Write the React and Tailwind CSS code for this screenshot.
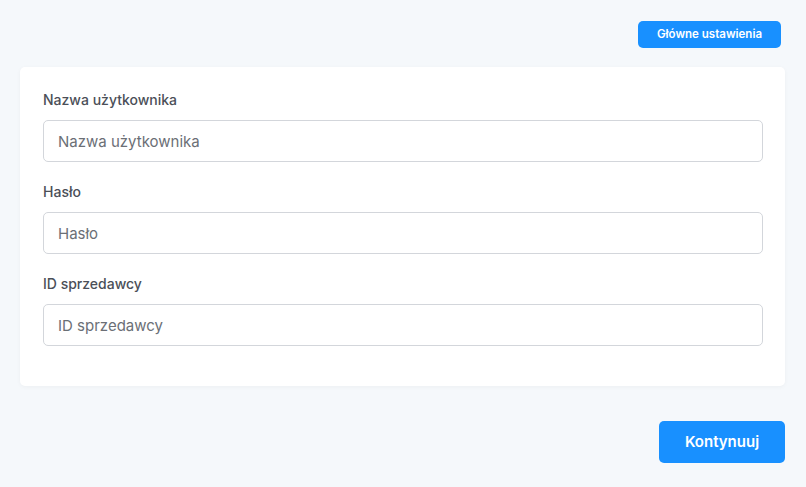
import React from "react";

const fields = ["Nazwa użytkownika", "Hasło", "ID sprzedawcy"];

export default function App() {
  return (
    <div
      className="min-h-[487px] bg-[#f5f8fb] pl-5 pr-[21px] pt-[21px]"
      style={{ fontFamily: "Inter, 'Noto Sans', sans-serif" }}
    >
      <div className="flex justify-end pr-1">
        <button className="h-[27px] w-[143px] rounded-[5px] bg-[#1890ff] text-[11.5px] font-semibold text-white">
          Główne ustawienia
        </button>
      </div>

      {/* Form Card */}
      <div className="mt-[19px] rounded-[5px] bg-white pl-[23px] pr-[22px] pt-[21px] pb-10 shadow-[0_1px_4px_rgba(0,0,0,0.04)]">
        {fields.map((f, i) => (
          <div key={f} className={i > 0 ? "mt-[18px]" : ""}>
            <label className="block h-6 text-[14px] leading-6 font-medium text-[#4b4f58]">{f}</label>
            <input
              placeholder={f}
              className="mt-2 block h-[42px] w-full rounded-[5px] border border-[#d3d6db] px-[14px] text-[15px] text-[#555] placeholder:text-[#6b6f76] outline-none"
            />
          </div>
        ))}
      </div>

      <div className="mt-[35px] flex justify-end">
        <button className="h-[42px] w-[126px] rounded-[5px] bg-[#1890ff] text-[15px] font-semibold text-white">
          Kontynuuj
        </button>
      </div>
    </div>
  );
}
